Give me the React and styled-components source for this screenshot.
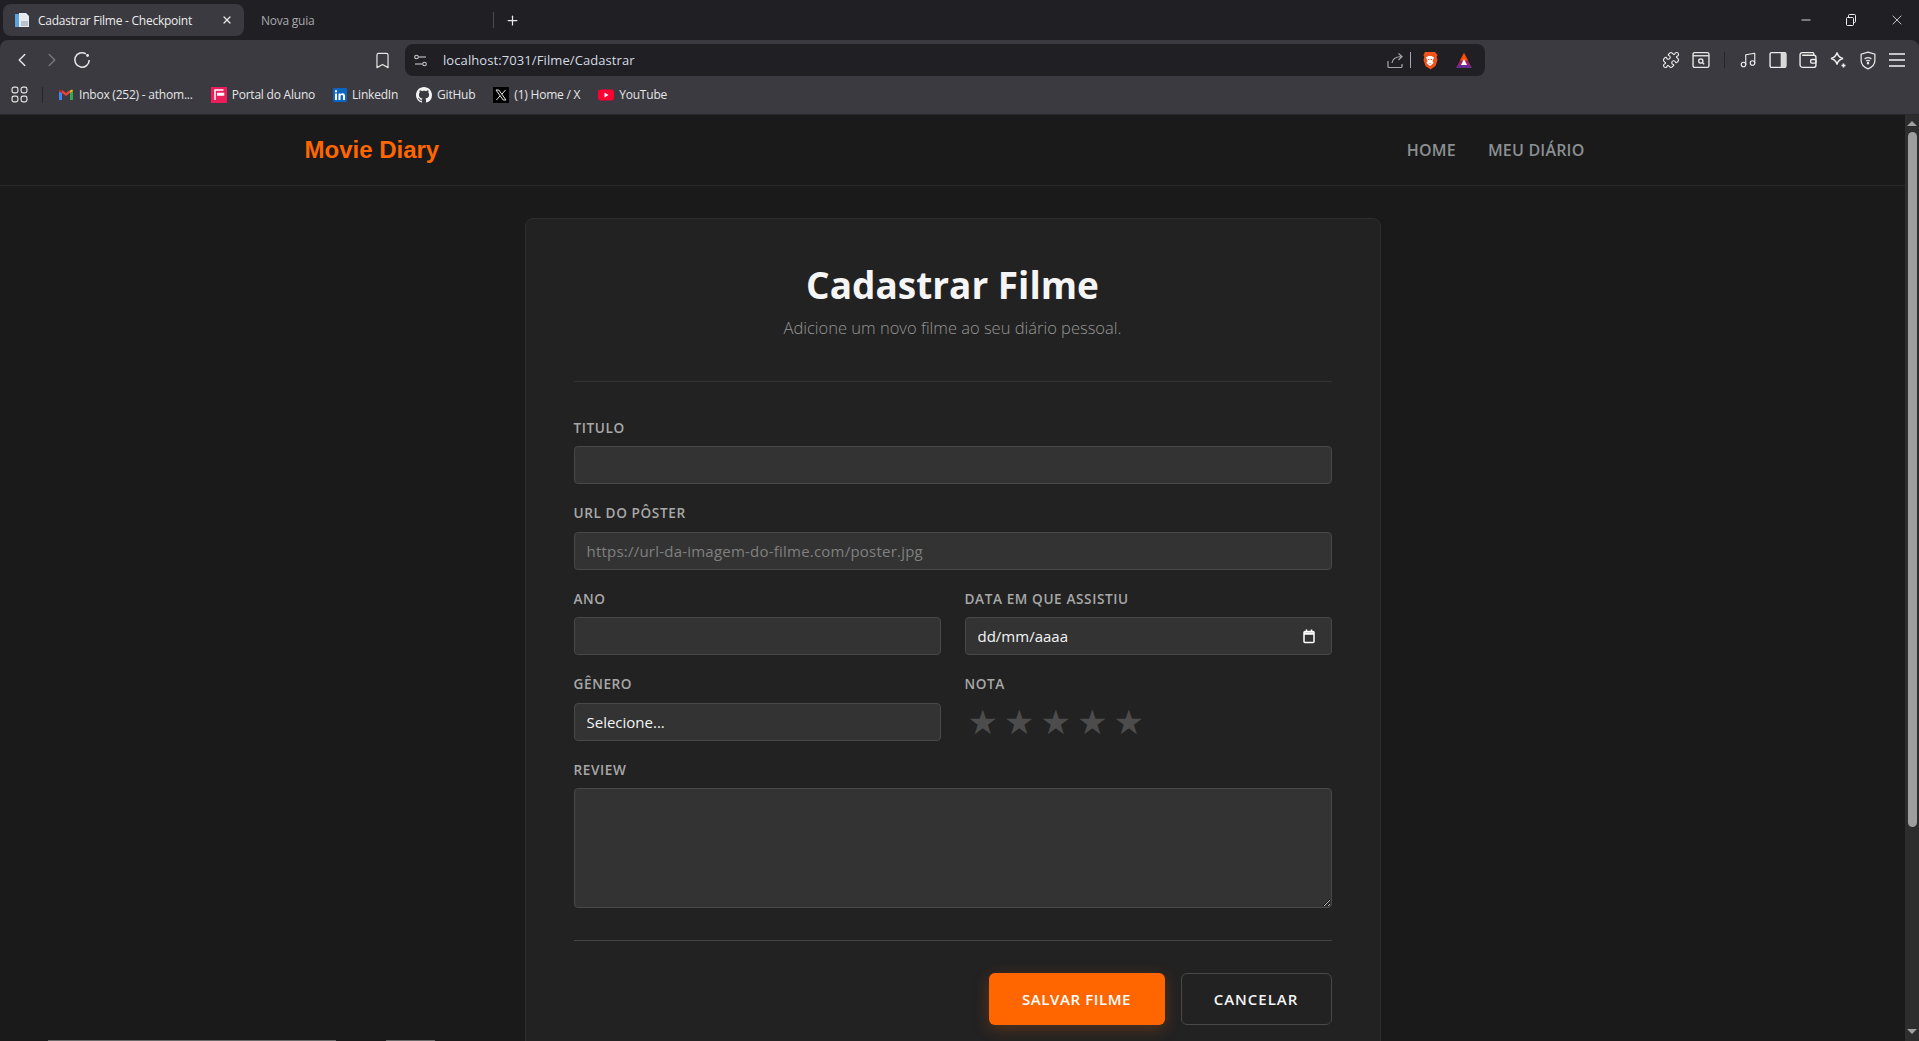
import React from "react";
import styled, { createGlobalStyle } from "styled-components";
import { X, Plus, Minus, ChevronLeft, ChevronRight, Bookmark, Puzzle, Music } from "lucide-react";

const GlobalStyle = createGlobalStyle`
  html, body {
    margin: 0;
    padding: 0;
    height: 100%;
    overflow: hidden;
    background: #1a1a1a;
    font-family: "Open Sans", "Noto Sans", sans-serif;
  }
  * { box-sizing: border-box; }
`;

const bookmarks = [
  { name: "Inbox (252) - athom...", icon: "gmail" },
  { name: "Portal do Aluno", icon: "portal" },
  { name: "LinkedIn", icon: "linkedin" },
  { name: "GitHub", icon: "github" },
  { name: "(1) Home / X", icon: "x" },
  { name: "YouTube", icon: "youtube" },
];

const BookmarkIcon = ({ kind }) => {
  if (kind === "gmail")
    return (
      <svg width="16" height="16" viewBox="0 0 16 16">
        <path d="M1 13V4l3 2v7z" fill="#4285f4" />
        <path d="M15 13V4l-3 2v7z" fill="#34a853" />
        <path d="M4 6V3l4 3 4-3v3L8 9z" fill="#ea4335" />
        <path d="M1 4c0-1 1-1.600 2-1l1 .7V6z" fill="#c5221f" />
        <path d="M15 4c0-1-1-1.600-2-1l-1 .7V6z" fill="#fbbc04" />
      </svg>
    );
  if (kind === "portal")
    return (
      <svg width="16" height="16" viewBox="0 0 16 16">
        <rect width="16" height="16" fill="#ed1c5b" />
        <path d="M4 13V3h8.500M6 6.500h6.500V8H6" fill="none" stroke="#fff" strokeWidth="1.500" />
      </svg>
    );
  if (kind === "linkedin")
    return (
      <svg width="14" height="14" viewBox="0 0 14 14">
        <rect width="14" height="14" rx="1" fill="#0a66c2" />
        <path d="M2 5.500h2V12H2zM2 2.200h2v2H2zM5.500 5.500h2v1c.5-.8 1.200-1.200 2.100-1.200 1.700 0 2.400 1.100 2.400 2.800V12h-2V8.500c0-.9-.3-1.500-1.100-1.500-.9 0-1.400.6-1.400 1.600V12h-2z" fill="#fff" />
      </svg>
    );
  if (kind === "github")
    return (
      <svg width="16" height="16" viewBox="0 0 16 16">
        <path fill="#f4f4f4" d="M8 0C3.580 0 0 3.580 0 8c0 3.540 2.290 6.530 5.470 7.590.4.070.55-.17.55-.38 0-.19-.01-.82-.01-1.490-2.010.37-2.530-.49-2.690-.94-.09-.23-.48-.94-.82-1.130-.28-.15-.68-.52-.01-.53.63-.01 1.080.58 1.230.82.720 1.210 1.870.87 2.330.66.070-.52.280-.87.510-1.070-1.780-.2-3.640-.89-3.640-3.950 0-.87.310-1.590.820-2.150-.080-.2-.36-1.020.080-2.120 0 0 .67-.21 2.200.82.640-.18 1.320-.27 2-.27s1.360.090 2 .27c1.530-1.040 2.200-.82 2.200-.82.440 1.100.160 1.920.080 2.120.51.560.820 1.270.820 2.150 0 3.070-1.870 3.750-3.650 3.950.290.250.540.730.540 1.480 0 1.070-.01 1.930-.01 2.200 0 .21.150.46.550.38A8.010 8.010 0 0 0 16 8c0-4.420-3.580-8-8-8z" />
      </svg>
    );
  if (kind === "x")
    return (
      <svg width="16" height="16" viewBox="0 0 16 16">
        <rect width="16" height="16" fill="#000" />
        <path d="M3 3h2.800l7.200 10h-2.800zM12.500 3 8.800 7.200M7 8.900 3.400 13" fill="none" stroke="#e8e8e8" strokeWidth="1" />
      </svg>
    );
  return (
    <svg width="16" height="16" viewBox="0 0 16 16">
      <rect y="2.500" width="16" height="11" rx="3" fill="#ff0033" />
      <path d="M6.500 5.500v5L10.500 8z" fill="#fff" />
    </svg>
  );
};

const App = () => {
  return (
    <Window>
      <GlobalStyle />
      <TitleBar>
        <ActiveTab>
          <svg width="16" height="16" viewBox="0 0 16 16">
            <path d="M1 2h6v13H1z" fill="#5ba3dc" />
            <path d="M5 1h7l3 3v11H5z" fill="#e6eaef" />
            <path d="M7 9h7v5H7z" fill="#b9c3cc" />
          </svg>
          <TabTitle>Cadastrar Filme - Checkpoint</TabTitle>
          <X size={12} color="#e8e8e8" strokeWidth={2.5} />
        </ActiveTab>
        <IdleTab>Nova guia</IdleTab>
        <TabDivider />
        <NewTab>
          <Plus size={15} color="#e8e8e8" strokeWidth={2} />
        </NewTab>
        <WindowControls>
          <Minus size={14} color="#eee" strokeWidth={1.5} />
          <svg width="12" height="12" viewBox="0 0 12 12" fill="none" stroke="#eee" strokeWidth="1">
            <rect x="1.500" y="3.500" width="7" height="8" rx="1" />
            <path d="M3.500 3.500V1.500a1 1 0 0 1 1-1h5a1 1 0 0 1 1 1v6a1 1 0 0 1-1 1h-1" />
          </svg>
          <X size={16} color="#eee" strokeWidth={1.2} />
        </WindowControls>
      </TitleBar>

      <Toolbar>
        <NavRow>
          <NavButtons>
            <ChevronLeft size={22} color="#e6e6e6" strokeWidth={1.6} />
            <ChevronRight size={22} color="#77777c" strokeWidth={1.6} />
            <svg width="20" height="20" viewBox="0 0 18 18" fill="none" stroke="#e6e6e6" strokeWidth="1.400">
              <path d="M15.500 9a6.500 6.500 0 1 1-3-5.500" />
              <circle cx="14" cy="5" r="1.300" fill="#e6e6e6" stroke="none" />
            </svg>
          </NavButtons>
          <BookmarkSlot>
            <Bookmark size={19} color="#e6e6e6" strokeWidth={1.5} />
          </BookmarkSlot>
          <AddressBar>
            <svg width="13" height="13" viewBox="0 0 13 13" fill="none" stroke="#c8c8c8" strokeWidth="1.100">
              <circle cx="2.500" cy="3" r="1.800" />
              <path d="M4.500 3H12" />
              <circle cx="10.500" cy="10" r="1.800" />
              <path d="M1 10h7.500" />
            </svg>
            <UrlText>localhost:7031/Filme/Cadastrar</UrlText>
            <AddressActions>
              <svg width="17" height="17" viewBox="0 0 17 17" fill="none" stroke="#a8a8ac" strokeWidth="1.200">
                <path d="M1 9v5.500a1 1 0 0 0 1 1h12a1 1 0 0 0 1-1V12" />
                <path d="M5 11c.5-4 3-6 9-6.500M11.500 1.500l3.500 3-3.500 3.500" />
              </svg>
              <AddressDivider />
              <svg width="16" height="19" viewBox="0 0 16 19">
                <path d="M3 1h10l2.500 3-.8 2 .8 3-2 6-5 3.500-5-3.500-2-6 .8-3-.8-2z" fill="#f1541b" />
                <path d="M4 6.500 6.500 5h3L12 6.500 10.500 10l1 2L8 15l-3.500-3 1-2z" fill="#fff" />
                <path d="M6 8h1.200v1H6zM8.800 8H10v1H8.800zM7 12h2l-1 1z" fill="#f1541b" />
              </svg>
              <BatSlot>
                <svg width="16" height="15" viewBox="0 0 16 15">
                  <path d="M8 0 16 15H0z" fill="#9e1f63" />
                  <path d="M8 0 12 7.500H4z" fill="#ff5000" />
                  <path d="M0 15h16l-2.500-3h-11z" fill="#662d91" />
                  <path d="M8 6l3 6H5z" fill="#fff" />
                </svg>
              </BatSlot>
            </AddressActions>
          </AddressBar>
          <ExtensionIcons>
            <Puzzle size={18} color="#eee" strokeWidth={1.5} />
            <svg width="18" height="18" viewBox="0 0 17 17" fill="none" stroke="#e6e6e6" strokeWidth="1.300">
              <rect x="1" y="1.500" width="15" height="14" rx="1.500" />
              <path d="M1 4.500h15" />
              <circle cx="8.300" cy="9.500" r="2" />
              <path d="m10 11 1.500 1.500" />
            </svg>
            <ToolbarDivider />
            <Music size={18} color="#eee" strokeWidth={1.5} />
            <svg width="18" height="18" viewBox="0 0 17 17">
              <rect x="1" y="1.500" width="15" height="14" rx="1.500" fill="none" stroke="#eee" strokeWidth="1.300" />
              <rect x="11" y="1.500" width="5" height="14" fill="#d8d8d8" />
            </svg>
            <svg width="18" height="18" viewBox="0 0 17 17" fill="none" stroke="#eee" strokeWidth="1.300">
              <path d="M14 4V2.500a1 1 0 0 0-1-1H3a2 2 0 0 0-2 2V13a2.500 2.500 0 0 0 2.500 2.500H14a2 2 0 0 0 2-2V6a2 2 0 0 0-2-2H3" />
              <rect x="11" y="8" width="5" height="3.500" rx="1" />
            </svg>
            <svg width="18" height="18" viewBox="0 0 18 18" fill="none" stroke="#eee" strokeWidth="1.300">
              <path d="M8 1.500c.8 3.500 2.500 5.200 6 6-3.500.8-5.200 2.500-6 6-.8-3.500-2.500-5.200-6-6 3.500-.8 5.200-2.500 6-6z" />
              <path d="M14.500 12.500v4M12.500 14.500h4" strokeWidth="1.600" />
            </svg>
            <svg width="18" height="19" viewBox="0 0 16 18" fill="none" stroke="#e6e6e6" strokeWidth="1.200">
              <path d="M8 1 14.500 3v6c0 4-3 6.500-6.500 8-3.500-1.500-6.500-4-6.500-8V3z" />
              <path d="M4.800 7.500c1.900-1.500 4.500-1.500 6.400 0M6.200 9.500c1.100-.8 2.500-.8 3.600 0" />
              <circle cx="8" cy="11.500" r=".6" fill="#e6e6e6" />
            </svg>
            <MenuLines>
              <span />
              <span />
              <span />
            </MenuLines>
          </ExtensionIcons>
        </NavRow>
        <BookmarksRow>
          <AppsIcon viewBox="0 0 16 16" width="17" height="17" fill="none" stroke="#e6e6e6" strokeWidth="1.100">
            <rect x="1" y="1" width="5.500" height="5.500" rx="1.800" />
            <rect x="9.500" y="1" width="5.500" height="5.500" rx="1.800" />
            <rect x="1" y="9.500" width="5.500" height="5.500" rx="1.800" />
            <rect x="9.500" y="9.500" width="5.500" height="5.500" rx="1.800" />
          </AppsIcon>
          <BookmarksDivider />
          {bookmarks.map((item) => (
            <BookmarkItem key={item.name}>
              <BookmarkIcon kind={item.icon} />
              <span>{item.name}</span>
            </BookmarkItem>
          ))}
        </BookmarksRow>
      </Toolbar>

      <Viewport>
        <Page>
          <Navbar>
            <NavContainer>
              <Brand>Movie Diary</Brand>
              <NavLinks>
                <NavLink>HOME</NavLink>
                <NavLink>MEU DIÁRIO</NavLink>
              </NavLinks>
            </NavContainer>
          </Navbar>
          <Card>
            <CardHeader>
              <Title>Cadastrar Filme</Title>
              <Subtitle>Adicione um novo filme ao seu diário pessoal.</Subtitle>
            </CardHeader>
            <Form>
              <Field>
                <Label>Titulo</Label>
                <TextInput />
              </Field>
              <Field>
                <Label>URL do Pôster</Label>
                <TextInput placeholder="https://url-da-imagem-do-filme.com/poster.jpg" />
              </Field>
              <TwoColumns>
                <Field>
                  <Label>Ano</Label>
                  <TextInput />
                </Field>
                <Field>
                  <Label>Data em que assistiu</Label>
                  <DateBox>
                    <DateInput defaultValue="dd/mm/aaaa" />
                    <svg width="14" height="15" viewBox="0 0 14 15" fill="none" stroke="#fff" strokeWidth="1.500">
                      <rect x="2" y="2.500" width="10" height="11" rx="1" />
                      <path d="M2 4.500h10" strokeWidth="2.500" />
                      <path d="M4.500 0.500v2M9.500 0.500v2" />
                    </svg>
                  </DateBox>
                </Field>
              </TwoColumns>
              <TwoColumns>
                <Field>
                  <Label>Gênero</Label>
                  <GenreSelect defaultValue="">
                    <option value="">Selecione...</option>
                  </GenreSelect>
                </Field>
                <Field>
                  <Label>Nota</Label>
                  <Stars>
                    {[1, 2, 3, 4, 5].map((n) => (
                      <Star key={n}>★</Star>
                    ))}
                  </Stars>
                </Field>
              </TwoColumns>
              <Field>
                <Label>Review</Label>
                <ReviewBox />
              </Field>
              <FormFooter>
                <SaveButton type="button">Salvar Filme</SaveButton>
                <CancelButton type="button">Cancelar</CancelButton>
              </FormFooter>
            </Form>
          </Card>
        </Page>
        <ScrollTrack>
          <ArrowUp />
          <ScrollThumb />
          <ArrowDown />
        </ScrollTrack>
      </Viewport>
      <TaskbarEdge>
        <EdgeMark $left={48} $width={288} />
        <EdgeMark $left={386} $width={49} />
      </TaskbarEdge>
    </Window>
  );
};

export default App;

const Window = styled.div`
  position: relative;
  display: flex;
  flex-direction: column;
  height: 100vh;
  overflow: hidden;
  background: #1f1f24;
`;

const TitleBar = styled.div`
  display: flex;
  align-items: center;
  height: 40px;
  flex-shrink: 0;
  padding-left: 3px;
`;

const ActiveTab = styled.div`
  display: flex;
  align-items: center;
  width: 241px;
  height: 32px;
  padding: 0 11px 0 11px;
  background: #3a3a40;
  border-radius: 8px;
  gap: 8px;
`;

const TabTitle = styled.span`
  flex: 1;
  font-size: 12px;
  color: #ececec;
  white-space: nowrap;
  letter-spacing: -0.25px;
`;

const IdleTab = styled.div`
  width: 249px;
  padding-left: 17px;
  font-size: 12px;
  color: #a9a9ad;
  letter-spacing: -0.25px;
`;

const TabDivider = styled.div`
  width: 1px;
  height: 16px;
  background: #4a4a50;
`;

const NewTab = styled.div`
  display: flex;
  margin-left: 11px;
`;

const WindowControls = styled.div`
  display: flex;
  align-items: center;
  gap: 32px;
  margin-left: auto;
  padding-right: 14px;
`;

const Toolbar = styled.div`
  display: flex;
  flex-direction: column;
  height: 75px;
  flex-shrink: 0;
  background: #3a3a40;
  border-radius: 8px 8px 0 0;
  border-bottom: 1px solid #2a2a2e;
`;

const NavRow = styled.div`
  display: flex;
  align-items: center;
  height: 36px;
  margin-top: 2px;
`;

const NavButtons = styled.div`
  display: flex;
  align-items: center;
  gap: 8px;
  width: 373px;
  padding-left: 11px;
  svg:last-child {
    margin-left: 1px;
  }
`;

const BookmarkSlot = styled.div`
  display: flex;
  width: 32px;
`;

const AddressBar = styled.div`
  display: flex;
  align-items: center;
  width: 1080px;
  height: 32px;
  padding: 0 13px 0 9px;
  background: #1f1f24;
  border-radius: 8px;
`;

const UrlText = styled.span`
  margin-left: 16px;
  font-size: 13px;
  color: #d6dbe2;
  letter-spacing: 0.09px;
`;

const AddressActions = styled.div`
  display: flex;
  align-items: center;
  margin-left: auto;
`;

const AddressDivider = styled.div`
  width: 1px;
  height: 16px;
  margin: 0 11px 0 6px;
  background: #a8a8ac;
`;

const BatSlot = styled.div`
  display: flex;
  margin-left: 18px;
`;

const ExtensionIcons = styled.div`
  display: flex;
  align-items: center;
  margin-left: auto;
  padding-right: 14px;
  gap: 12px;
`;

const ToolbarDivider = styled.div`
  width: 1px;
  height: 16px;
  margin: 0 2px;
  background: #26262a;
`;

const MenuLines = styled.div`
  display: flex;
  flex-direction: column;
  gap: 4px;
  span {
    display: block;
    width: 16px;
    height: 2px;
    background: #c4c4c8;
  }
`;

const BookmarksRow = styled.div`
  display: flex;
  align-items: center;
  height: 33px;
  padding-left: 11px;
`;

const AppsIcon = styled.svg`
  flex-shrink: 0;
`;

const BookmarksDivider = styled.div`
  width: 1px;
  height: 16px;
  margin: 0 15px 0 14px;
  background: #26262a;
`;

const BookmarkItem = styled.div`
  display: flex;
  align-items: center;
  gap: 5px;
  margin-right: 18px;
  font-size: 12px;
  color: #e6e6e6;
  letter-spacing: -0.22px;
  white-space: nowrap;
`;

const Viewport = styled.div`
  display: flex;
  flex: 1;
  min-height: 0;
`;

const Page = styled.div`
  flex: 1;
  min-width: 0;
  overflow: hidden;
  background: #1a1a1a;
`;

const Navbar = styled.header`
  height: 71px;
  border-bottom: 1px solid #2a2a2a;
`;

const NavContainer = styled.div`
  display: flex;
  align-items: center;
  justify-content: space-between;
  max-width: 1320px;
  height: 100%;
  margin: 0 auto;
  padding: 0 12px;
`;

const Brand = styled.span`
  font-family: "Liberation Sans", Arial, sans-serif;
  font-size: 24px;
  font-weight: 700;
  color: #ff6600;
`;

const NavLinks = styled.nav`
  display: flex;
`;

const NavLink = styled.span`
  padding: 0 16px;
  font-size: 16px;
  font-weight: 600;
  color: #8c8f92;
  letter-spacing: 0.2px;
`;

const Card = styled.section`
  width: 856px;
  margin: 32px auto 0;
  padding: 40px 48px 48px;
  background: #222222;
  border: 1px solid #2e2e2e;
  border-radius: 8px;
`;

const CardHeader = styled.div`
  height: 123px;
  margin-bottom: 36.500px;
  border-bottom: 1px solid #333333;
  text-align: center;
`;

const Title = styled.h1`
  margin: 0 0 5px;
  font-size: 37px;
  line-height: 52px;
  font-weight: 700;
  color: #f5f5f5;
`;

const Subtitle = styled.p`
  margin: 0;
  font-size: 16.500px;
  line-height: 24px;
  font-weight: 300;
  color: #969696;
`;

const Form = styled.form`
  display: flex;
  flex-direction: column;
  gap: 20px;
`;

const Field = styled.div`
  display: flex;
  flex-direction: column;
  min-width: 0;
`;

const TwoColumns = styled.div`
  display: grid;
  grid-template-columns: 1fr 1fr;
  gap: 24px;
`;

const Label = styled.label`
  margin-bottom: 10.500px;
  font-size: 13.600px;
  line-height: 17px;
  font-weight: 600;
  color: #a8a8a8;
  text-transform: uppercase;
  letter-spacing: 0.6px;
`;

const TextInput = styled.input`
  height: 38px;
  padding: 0 12px;
  background: #333333;
  border: 1px solid #484848;
  border-radius: 4px;
  font-family: inherit;
  font-size: 15px;
  color: #f5f5f5;
  outline: none;
  &::placeholder {
    color: #808080;
    letter-spacing: 0.22px;
  }
`;

const DateBox = styled.div`
  display: flex;
  align-items: center;
  height: 38px;
  padding: 0 15px 0 12px;
  background: #333333;
  border: 1px solid #484848;
  border-radius: 4px;
`;

const DateInput = styled.input`
  flex: 1;
  min-width: 0;
  padding: 0;
  background: transparent;
  border: none;
  outline: none;
  font-family: inherit;
  font-size: 15px;
  color: #f5f5f5;
`;

const GenreSelect = styled.select`
  height: 38px;
  padding: 0 12px;
  background: #333333;
  border: 1px solid #484848;
  border-radius: 4px;
  font-family: inherit;
  font-size: 15px;
  color: #f5f5f5;
  outline: none;
  appearance: none;
`;

const Stars = styled.div`
  display: flex;
  align-items: center;
  height: 38px;
`;

const Star = styled.span`
  width: 36.500px;
  font-family: "DejaVu Sans", sans-serif;
  font-size: 34px;
  line-height: 38px;
  text-align: center;
  color: #4c4c4c;
`;

const ReviewBox = styled.textarea`
  height: 120px;
  padding: 12px;
  background: #333333;
  border: 1px solid #484848;
  border-radius: 4px;
  outline: none;
  font-family: inherit;
  font-size: 15px;
  color: #f5f5f5;
`;

const FormFooter = styled.div`
  display: flex;
  justify-content: flex-end;
  gap: 16px;
  margin-top: 12px;
  padding-top: 32px;
  border-top: 1px solid #444444;
`;

const SaveButton = styled.button`
  width: 176px;
  height: 52px;
  background: #ff6600;
  border: none;
  border-radius: 6px;
  box-shadow: 0 4px 15px rgba(255, 102, 0, 0.25);
  font-family: inherit;
  font-size: 15px;
  font-weight: 600;
  color: #fff;
  text-transform: uppercase;
  letter-spacing: 0.6px;
`;

const CancelButton = styled.button`
  width: 151px;
  height: 52px;
  background: transparent;
  border: 1px solid #484848;
  border-radius: 6px;
  font-family: inherit;
  font-size: 15px;
  font-weight: 600;
  color: #f5f5f5;
  text-transform: uppercase;
  letter-spacing: 1px;
`;

const ScrollTrack = styled.div`
  display: flex;
  flex-direction: column;
  align-items: center;
  width: 14px;
  flex-shrink: 0;
  background: #2d2d2d;
`;

const ArrowUp = styled.div`
  width: 0;
  height: 0;
  margin: 6px 0 6px;
  border-left: 5px solid transparent;
  border-right: 5px solid transparent;
  border-bottom: 5px solid #a0a0a0;
`;

const ScrollThumb = styled.div`
  width: 9px;
  height: 695px;
  border-radius: 5px;
  background: #9e9e9e;
`;

const ArrowDown = styled.div`
  width: 0;
  height: 0;
  margin-top: auto;
  margin-bottom: 7px;
  border-left: 5px solid transparent;
  border-right: 5px solid transparent;
  border-top: 5px solid #a0a0a0;
`;

const TaskbarEdge = styled.div`
  position: absolute;
  left: 0;
  right: 0;
  bottom: 0;
  height: 1px;
`;

const EdgeMark = styled.div`
  position: absolute;
  top: 0;
  left: ${({ $left }) => $left}px;
  width: ${({ $width }) => $width}px;
  height: 1px;
  background: #6a6a6a;
`;
